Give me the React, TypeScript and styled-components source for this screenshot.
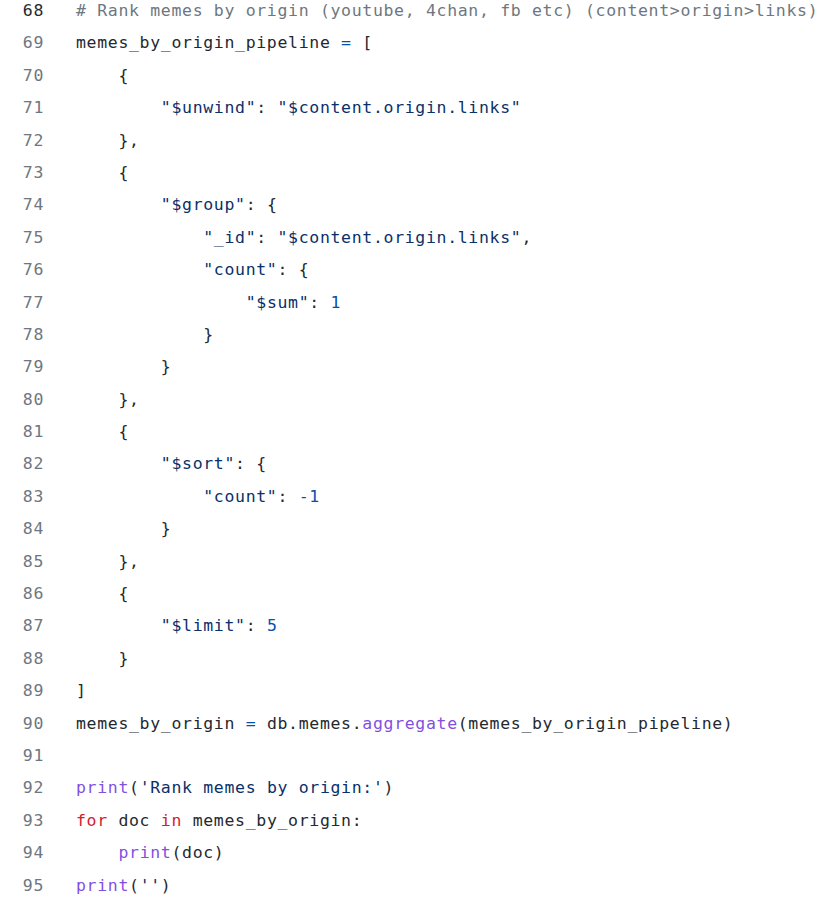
import React from "react";
import styled, { createGlobalStyle } from "styled-components";

const Global = createGlobalStyle`
  html, body { margin: 0; padding: 0; background: #ffffff; }
  body { overflow: hidden; }
`;

type Kind = "txt" | "com" | "str" | "kw" | "fn" | "num" | "op";

const colors: Record<Kind, string> = {
  txt: "#24292f",
  com: "#6e7781",
  str: "#0a3069",
  kw: "#cf222e",
  fn: "#8250df",
  num: "#0550ae",
  op: "#0550ae",
};

const CodeView = styled.div`
  margin-top: -5px;
  font-family: "DejaVu Sans Mono", "Liberation Mono", monospace;
  font-size: 16.5px;
  letter-spacing: 0.67px;
  line-height: 32.4px;
  color: #24292f;
`;

const Row = styled.div`
  display: grid;
  grid-template-columns: 44px 1fr;
  column-gap: 32px;
  height: 32.4px;
`;

const LineNo = styled.span<{ $active?: boolean }>`
  text-align: right;
  color: ${(p) => (p.$active ? "#24292f" : "#6e7781")};
`;

const Code = styled.span`
  white-space: pre;
`;

const Tok = styled.span<{ $k: Kind }>`
  color: ${(p) => colors[p.$k]};
`;

type Seg = [Kind, string];
const t = (s: string): Seg => ["txt", s];
const s = (x: string): Seg => ["str", x];
const n = (x: string): Seg => ["num", x];
const f = (x: string): Seg => ["fn", x];
const k = (x: string): Seg => ["kw", x];
const o = (x: string): Seg => ["op", x];

const lines: Seg[][] = [
  [["com", "# Rank memes by origin (youtube, 4chan, fb etc) (content>origin>links)"]],
  [t("memes_by_origin_pipeline "), o("="), t(" [")],
  [t("    {")],
  [t("        "), s('"$unwind"'), t(": "), s('"$content.origin.links"')],
  [t("    },")],
  [t("    {")],
  [t("        "), s('"$group"'), t(": {")],
  [t("            "), s('"_id"'), t(": "), s('"$content.origin.links"'), t(",")],
  [t("            "), s('"count"'), t(": {")],
  [t("                "), s('"$sum"'), t(": "), n("1")],
  [t("            }")],
  [t("        }")],
  [t("    },")],
  [t("    {")],
  [t("        "), s('"$sort"'), t(": {")],
  [t("            "), s('"count"'), t(": "), n("-1")],
  [t("        }")],
  [t("    },")],
  [t("    {")],
  [t("        "), s('"$limit"'), t(": "), n("5")],
  [t("    }")],
  [t("]")],
  [t("memes_by_origin "), o("="), t(" db.memes."), f("aggregate"), t("(memes_by_origin_pipeline)")],
  [],
  [f("print"), t("("), s("'Rank memes by origin:'"), t(")")],
  [k("for"), t(" doc "), k("in"), t(" memes_by_origin:")],
  [t("    "), f("print"), t("(doc)")],
  [f("print"), t("("), s("''"), t(")")],
];

export default function App() {
  return (
    <>
      <Global />
      <CodeView>
        {lines.map((segs, i) => (
          <Row key={i}>
            <LineNo $active={i === 0}>{68 + i}</LineNo>
            <Code>
              {segs.map(([kind, text], j) => (
                <Tok key={j} $k={kind}>
                  {text}
                </Tok>
              ))}
            </Code>
          </Row>
        ))}
      </CodeView>
    </>
  );
}
